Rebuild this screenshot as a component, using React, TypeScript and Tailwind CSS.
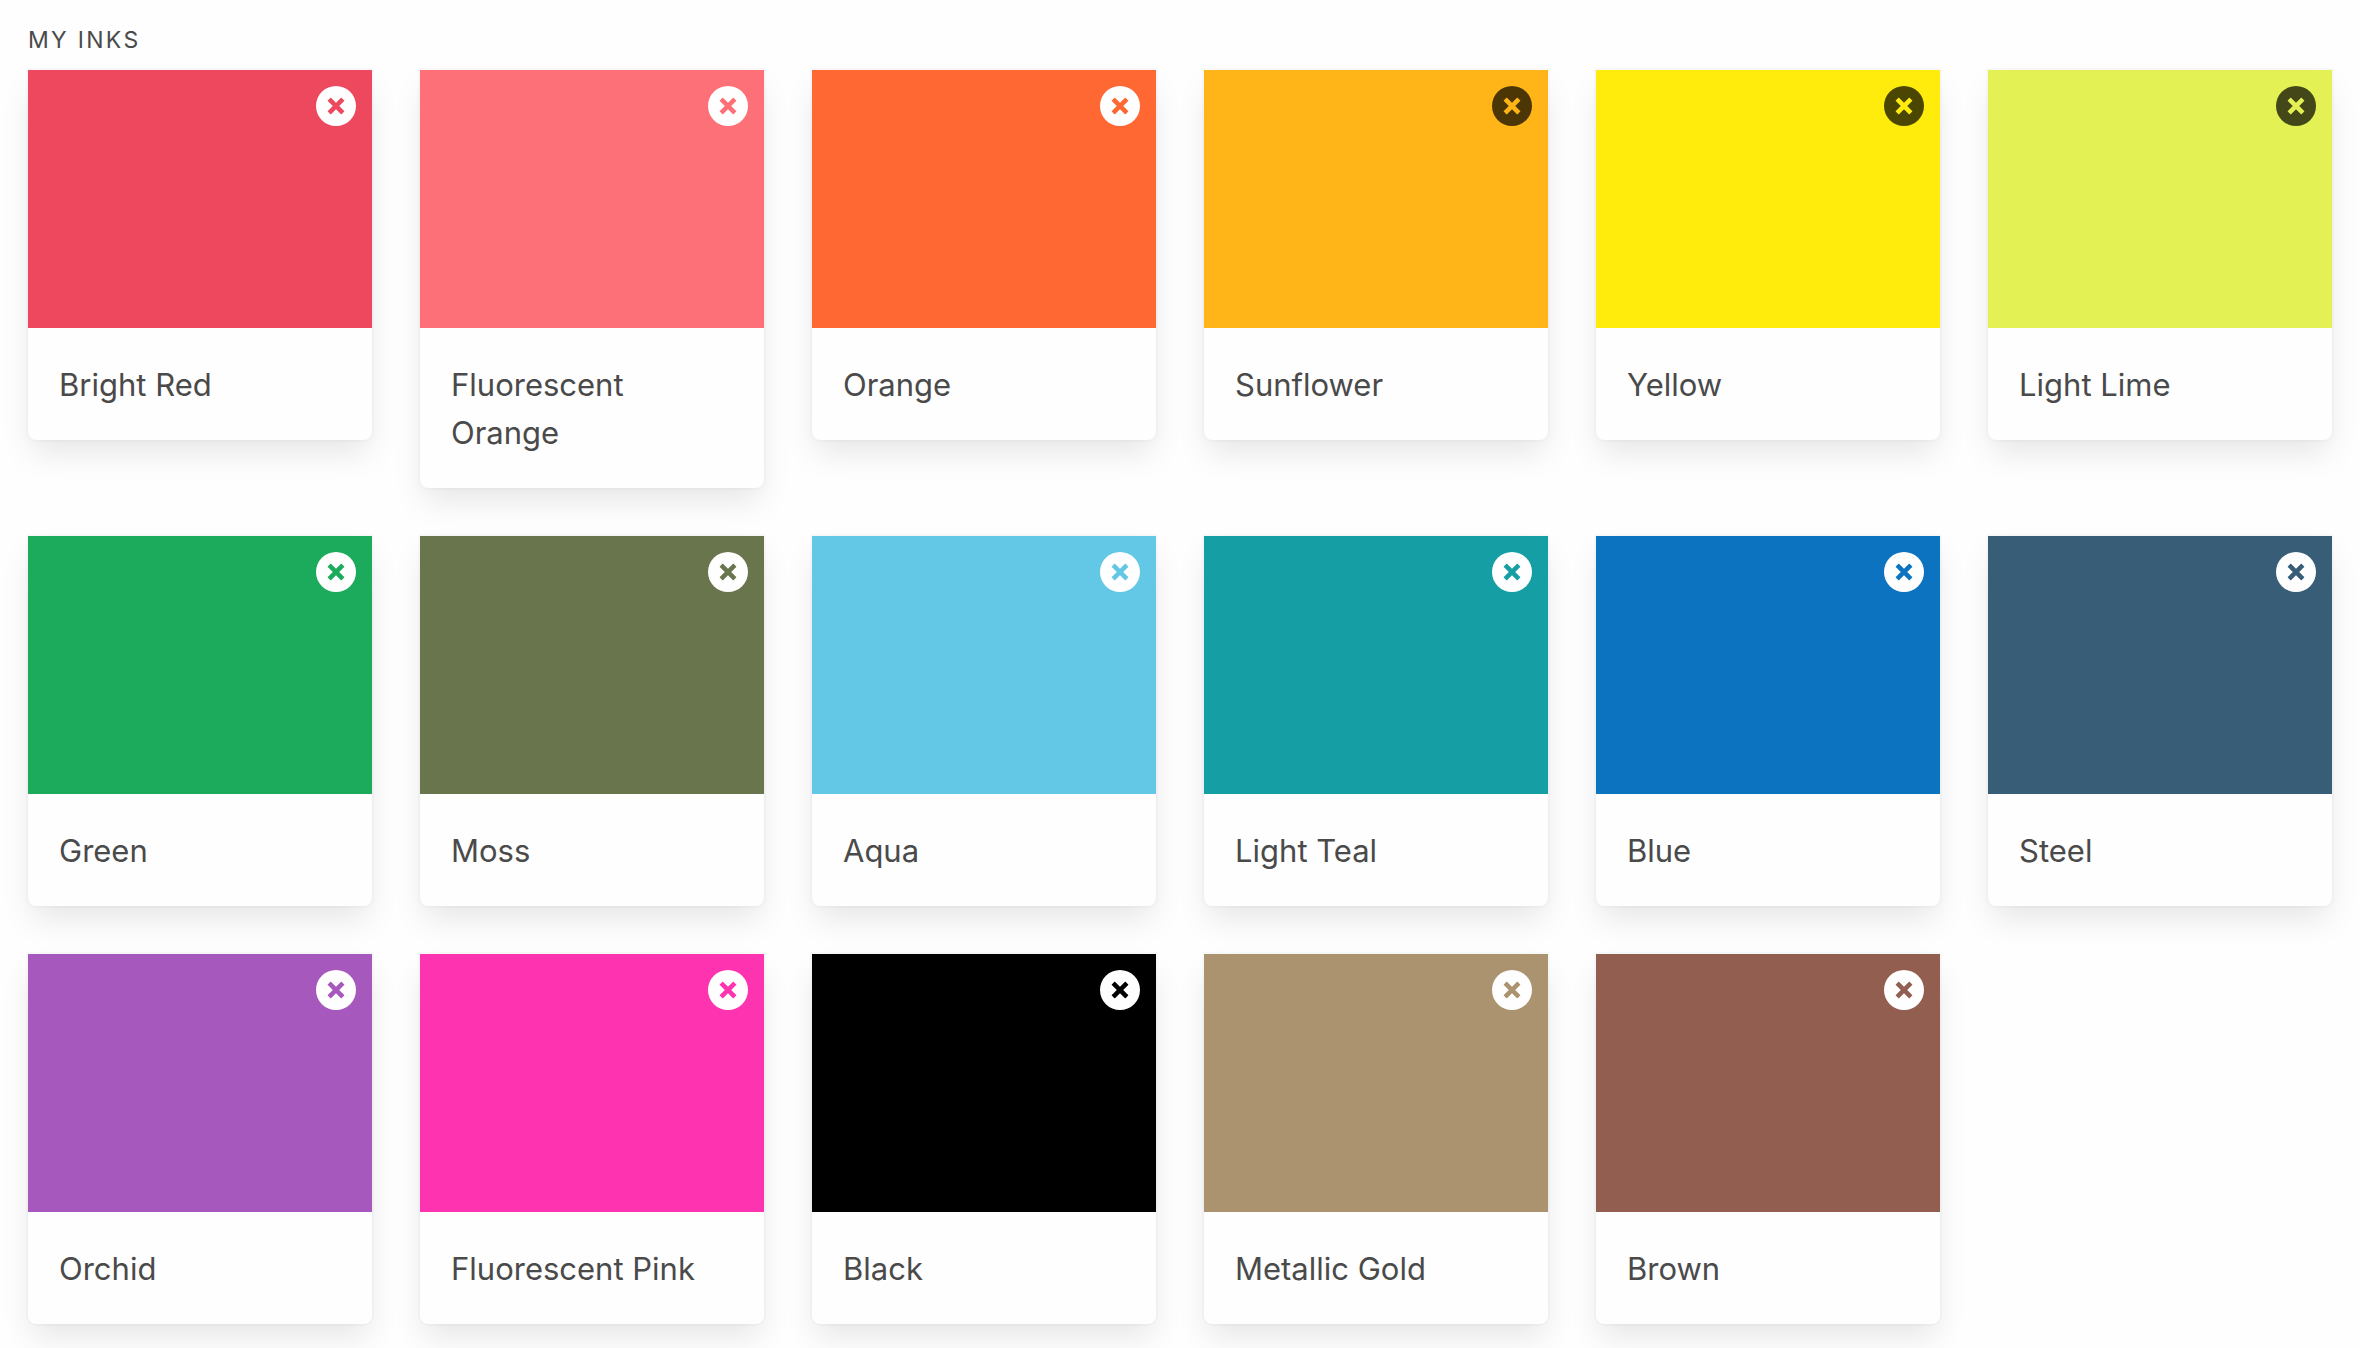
type Ink = { name: string; swatch: string; mark: string };

const LIGHT = "text-[#fefefe]";
const DARK = "text-black/70";

const inks: Ink[] = [
  { name: "Bright Red", swatch: "bg-[#ee485f]", mark: LIGHT },
  { name: "Fluorescent Orange", swatch: "bg-[#fd7077]", mark: LIGHT },
  { name: "Orange", swatch: "bg-[#ff6833]", mark: LIGHT },
  { name: "Sunflower", swatch: "bg-[#ffb517]", mark: DARK },
  { name: "Yellow", swatch: "bg-[#ffec0c]", mark: DARK },
  { name: "Light Lime", swatch: "bg-[#e3f154]", mark: DARK },
  { name: "Green", swatch: "bg-[#1cab5c]", mark: LIGHT },
  { name: "Moss", swatch: "bg-[#69754d]", mark: LIGHT },
  { name: "Aqua", swatch: "bg-[#62c8e6]", mark: LIGHT },
  { name: "Light Teal", swatch: "bg-[#169ea5]", mark: LIGHT },
  { name: "Blue", swatch: "bg-[#0c73c0]", mark: LIGHT },
  { name: "Steel", swatch: "bg-[#385d77]", mark: LIGHT },
  { name: "Orchid", swatch: "bg-[#a758bd]", mark: LIGHT },
  { name: "Fluorescent Pink", swatch: "bg-[#fd33af]", mark: LIGHT },
  { name: "Black", swatch: "bg-black", mark: LIGHT },
  { name: "Metallic Gold", swatch: "bg-[#ab936f]", mark: LIGHT },
  { name: "Brown", swatch: "bg-[#925e50]", mark: LIGHT },
];

function RemoveIcon() {
  return (
    <svg viewBox="0 0 40 40" className="size-10" fill="currentColor" aria-hidden="true">
      <path
        fillRule="evenodd"
        d="M20 0a20 20 0 1 1 0 40a20 20 0 1 1 0-40ZM15 11.8a.4.4 0 0 0-.6 0l-2.6 2.6a.4.4 0 0 0 0 .6L16.8 20l-5 5a.4.4 0 0 0 0 .6l2.6 2.6a.4.4 0 0 0 .6 0L20 23.2l5 5a.4.4 0 0 0 .6 0l2.6-2.6a.4.4 0 0 0 0-.6L23.2 20l5-5a.4.4 0 0 0 0-.6l-2.6-2.6a.4.4 0 0 0-.6 0L20 16.8Z"
      />
    </svg>
  );
}

function InkCard({ name, swatch, mark }: Ink) {
  return (
    <li className="rounded-b-lg bg-[#fefefe] shadow-[0_16px_32px_-4px_rgba(10,10,10,0.1),0_0_0_2px_rgba(10,10,10,0.02)]">
      <div className={`relative aspect-[4/3] ${swatch}`}>
        <button
          type="button"
          aria-label={`Remove ${name}`}
          className={`absolute top-4 right-4 cursor-pointer rounded-full ${mark}`}
        >
          <RemoveIcon />
        </button>
      </div>
      <p className="px-[31px] pt-[33px] pb-[31px] text-[31px] leading-[48px]">{name}</p>
    </li>
  );
}

export default function App() {
  return (
    <main className="min-h-screen overflow-hidden bg-[#fefefe] px-7 pt-[22px] pb-6 font-['Inter',sans-serif] text-[#4a4a4a]">
      <h1 className="mb-3 text-[23px] leading-9 tracking-widest uppercase">My Inks</h1>
      <ul className="grid grid-cols-6 items-start gap-12">
        {inks.map((ink) => (
          <InkCard key={ink.name} {...ink} />
        ))}
      </ul>
    </main>
  );
}
